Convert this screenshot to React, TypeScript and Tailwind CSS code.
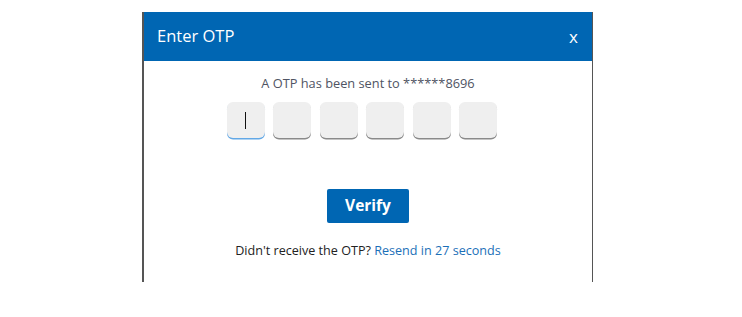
import * as React from "react";

const font = { fontFamily: '"Open Sans", "Noto Sans", sans-serif' };

function OtpBox({ active }: { active?: boolean }) {
  return (
    <div
      className={
        "mr-[8.5px] flex h-[36px] w-[38px] items-center justify-center rounded-[6px] bg-[#efefef] " +
        (active
          ? "shadow-[0_1.5px_0_0_#62a8e6]"
          : "shadow-[0_1.5px_0_0_#8a8a8a]")
      }
    >
      {active && <span className="block h-[17px] w-px bg-[#111]" />}
    </div>
  );
}

export default function App() {
  return (
    <div className="min-h-[317px] w-full bg-white pt-[12px]" style={font}>
      <div className="ml-[142px] flex h-[270px] w-[451px] flex-col border-l-2 border-r border-l-[#555] border-r-[#555] bg-white">
        <div className="flex h-[49px] items-center justify-between bg-[#0066b3] pl-[13px] pr-[14px] text-white">
          <div className="text-[16.5px] leading-none">Enter OTP</div>
          <div className="text-[17px] leading-none">x</div>
        </div>
        <div className="flex flex-col items-center">
          <div className="mt-[13px] text-[12.8px] leading-[18px] text-[#4f5463]">
            A OTP has been sent to ******8696
          </div>
          <div className="-ml-[4px] mt-[10px] flex">
            <OtpBox active />
            <OtpBox />
            <OtpBox />
            <OtpBox />
            <OtpBox />
            <OtpBox />
          </div>
          <button className="mt-[51px] flex h-[34px] w-[82px] items-center justify-center rounded-[2px] bg-[#0066b3] text-[15.5px] font-bold text-white">
            Verify
          </button>
          <div className="mt-[19px] text-[12.6px] leading-[18px] text-[#222]">
            Didn&apos;t receive the OTP?{" "}
            <span className="text-[#1b6fb8]">Resend in 27 seconds</span>
          </div>
        </div>
      </div>
    </div>
  );
}
